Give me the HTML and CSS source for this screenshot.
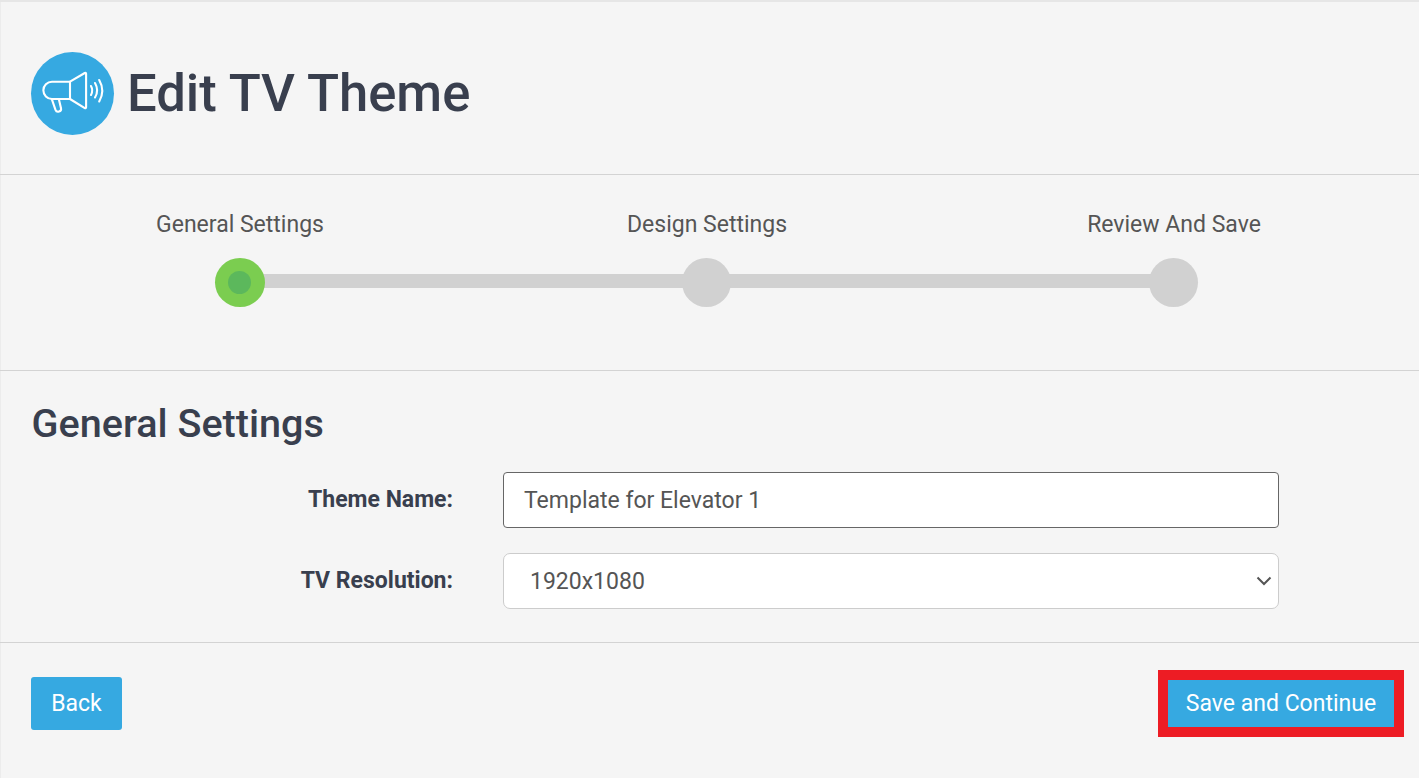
FILE: index.html
```html
<!DOCTYPE html>
<html lang="en">
<head>
<meta charset="utf-8">
<title>Edit TV Theme</title>
<link rel="stylesheet" href="styles.css">
</head>
<body>
<main class="page">
  <header class="header">
    <span class="logo">
      <svg class="logo-icon" viewBox="0 0 83 83" width="83" height="83" fill="none" stroke="#fff" stroke-width="2.100" stroke-linecap="round" stroke-linejoin="round">
        <path d="M39 29.700H21a8.650 8.650 0 0 0 0 17.300H39z"/>
        <path d="M39 29.700 53.800 21c.7-.4 1.300 0 1.300.8v33.500c0 .8-.6 1.200-1.300.8L39 47"/>
        <path d="m20.800 47.200 3.700 10.700c1.200 3.200 6.300 1.800 5.500-1.700L27.800 47"/>
        <path d="M60 34c1.600 3 1.600 6 0 9"/>
        <path d="M64 31c2.700 4.600 2.700 10 0 14.500"/>
        <path d="M68.200 28c3.900 6.800 3.900 14.700 0 21.500"/>
      </svg>
    </span>
    <h1 class="title">Edit TV Theme</h1>
  </header>

  <section class="steps">
    <div class="step">
      <span class="step-label">General Settings</span>
      <span class="dot dot-active"><span class="dot-core"></span></span>
    </div>
    <div class="step step-link">
      <span class="step-label">Design Settings</span>
      <span class="dot"></span>
    </div>
    <div class="step step-link">
      <span class="step-label">Review And Save</span>
      <span class="dot"></span>
    </div>
  </section>

  <section class="form-section">
    <h2 class="section-title">General Settings</h2>
    <form class="form">
      <label class="field-label" for="theme-name">Theme Name:</label>
      <input class="control control-focus" id="theme-name" type="text" value="Template for Elevator 1">
      <label class="field-label" for="tv-res">TV Resolution:</label>
      <span class="select-wrap">
        <select class="control control-select" id="tv-res">
          <option>1920x1080</option>
          <option>1280x720</option>
        </select>
        <svg class="chevron" viewBox="0 0 16 10" width="16" height="10" fill="none" stroke="#555" stroke-width="2">
          <path d="M1.500 1.500 8 8l6.500-6.500"/>
        </svg>
      </span>
    </form>
  </section>

  <footer class="footer">
    <button class="btn btn-back" type="button">Back</button>
    <span class="highlight"><button class="btn btn-flat" type="button">Save and Continue</button></span>
  </footer>
</main>
</body>
</html>
```

FILE: styles.css
```css
* {
  box-sizing: border-box;
}

html,
body {
  margin: 0;
  height: 100%;
}

body {
  background: #f5f5f5;
  color: #393f4e;
  font-family: Roboto, "Liberation Sans", sans-serif;
  overflow: hidden;
}

.page {
  min-height: 778px;
  border-top: 2px solid #e6e6e6;
  box-shadow: inset 1px 0 0 #ececec;
}

.header {
  display: flex;
  align-items: center;
  gap: 14px;
  height: 173px;
  padding: 10px 31px 0;
  border-bottom: 1px solid #d3d3d3;
}

.logo {
  display: block;
  width: 83px;
  height: 83px;
  margin-right: -1px;
  border-radius: 50%;
  background: #36a9e1;
  flex: none;
}

.logo-icon {
  display: block;
}

.title {
  margin: 0;
  font-size: 52.600px;
  font-weight: 500;
  line-height: 60px;
  color: #393f4e;
}

.steps {
  display: grid;
  grid-template-columns: repeat(3, 467px);
  justify-content: start;
  height: 196px;
  padding: 36px 0 0 6px;
  border-bottom: 1px solid #d3d3d3;
}

.step {
  position: relative;
  display: flex;
  flex-direction: column;
  align-items: center;
}

.step-link::before {
  content: "";
  position: absolute;
  left: -233px;
  right: 233px;
  top: 63px;
  height: 14px;
  background: #d1d1d1;
}

.step-label {
  padding-left: 1px;
  font-size: 23px;
  line-height: 28px;
  color: #555;
  margin-bottom: 19px;
}

.dot {
  position: relative;
  z-index: 1;
  display: flex;
  align-items: center;
  justify-content: center;
  width: 49px;
  height: 49px;
  border-radius: 50%;
  background: #d1d1d1;
}

.dot-active {
  width: 50px;
  background: #7bcd50;
}

.dot-core {
  width: 23px;
  height: 23px;
  border-radius: 50%;
  background: #5cb85c;
}

.form-section {
  height: 272px;
  padding: 31px 31px 0;
  border-bottom: 1px solid #d3d3d3;
}

.section-title {
  margin: 0 0 26px 0.500px;
  font-size: 39.600px;
  font-weight: 500;
  line-height: 44px;
  color: #393f4e;
}

.form {
  display: grid;
  grid-template-columns: 422px 776px;
  column-gap: 50px;
  row-gap: 25px;
  align-items: center;
}

.field-label {
  padding-bottom: 2px;
  text-align: right;
  font-size: 23px;
  font-weight: 700;
  color: #393f4e;
}

.control {
  display: block;
  width: 776px;
  height: 56px;
  margin: 0;
  background: #fff;
  border: 1px solid #ccc;
  border-radius: 4px;
  font-family: inherit;
  font-size: 23px;
  color: #555;
}

.control-focus {
  padding: 0 20px;
  border-color: #666;
  outline: none;
}

.select-wrap {
  position: relative;
  display: block;
}

.control-select {
  padding: 0 26px;
  border-radius: 7px;
  appearance: none;
}

.chevron {
  position: absolute;
  right: 7px;
  top: 23px;
  pointer-events: none;
}

.footer {
  display: flex;
  align-items: flex-start;
  justify-content: space-between;
  padding: 34px 15px 0 31px;
}

.btn {
  height: 53px;
  padding: 0;
  border: 0;
  border-radius: 3px;
  background: #36a9e1;
  color: #fff;
  font-family: inherit;
  font-size: 23px;
  cursor: pointer;
}

.btn-back {
  width: 91px;
}

.btn-flat {
  display: block;
  width: 226px;
  height: 47px;
  border-radius: 0;
}

.highlight {
  display: block;
  margin-top: -7px;
  border: 10px solid #ed1c24;
}
```
